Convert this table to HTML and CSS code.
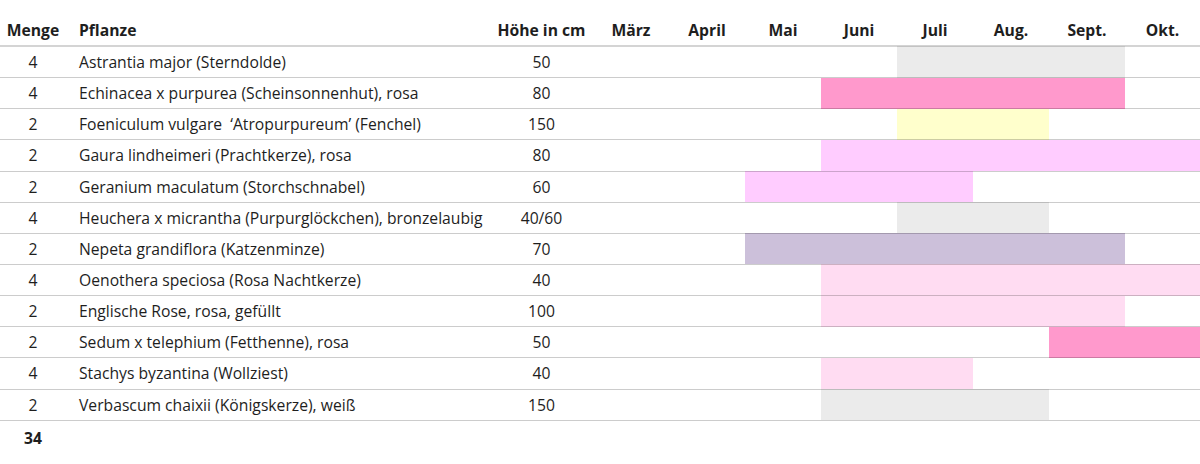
FILE: index.html
```html
<!DOCTYPE html>
<html lang="de">
<head>
<meta charset="utf-8">
<title>Pflanzplan</title>
<link rel="stylesheet" href="styles.css">
</head>
<body>
<table class="plan">
  <colgroup>
    <col class="c-qty"><col class="c-name"><col class="c-h">
    <col class="c-m"><col class="c-m"><col class="c-m"><col class="c-m"><col class="c-m"><col class="c-m"><col class="c-m"><col class="c-m last">
  </colgroup>
  <thead>
    <tr><th>Menge</th><th class="left">Pflanze</th><th>Höhe in cm</th><th>März</th><th>April</th><th>Mai</th><th>Juni</th><th>Juli</th><th>Aug.</th><th>Sept.</th><th>Okt.</th></tr>
  </thead>
  <tbody>
    <tr><td>4</td><td class="left">Astrantia major (Sterndolde)</td><td>50</td><td></td><td></td><td></td><td></td><td class="gray"></td><td class="gray"></td><td class="gray"></td><td></td></tr>
    <tr><td>4</td><td class="left">Echinacea x purpurea (Scheinsonnenhut), rosa</td><td>80</td><td></td><td></td><td></td><td class="pink"></td><td class="pink"></td><td class="pink"></td><td class="pink"></td><td></td></tr>
    <tr><td>2</td><td class="left">Foeniculum vulgare &nbsp;‘Atropurpureum’ (Fenchel)</td><td>150</td><td></td><td></td><td></td><td></td><td class="yellow"></td><td class="yellow"></td><td></td><td></td></tr>
    <tr><td>2</td><td class="left">Gaura lindheimeri (Prachtkerze), rosa</td><td>80</td><td></td><td></td><td></td><td class="lilac"></td><td class="lilac"></td><td class="lilac"></td><td class="lilac"></td><td class="lilac"></td></tr>
    <tr><td>2</td><td class="left">Geranium maculatum (Storchschnabel)</td><td>60</td><td></td><td></td><td class="lilac"></td><td class="lilac"></td><td class="lilac"></td><td></td><td></td><td></td></tr>
    <tr><td>4</td><td class="left">Heuchera x micrantha (Purpurglöckchen), bronzelaubig</td><td>40/60</td><td></td><td></td><td></td><td></td><td class="gray"></td><td class="gray"></td><td></td><td></td></tr>
    <tr><td>2</td><td class="left">Nepeta grandiflora (Katzenminze)</td><td>70</td><td></td><td></td><td class="purple"></td><td class="purple"></td><td class="purple"></td><td class="purple"></td><td class="purple"></td><td></td></tr>
    <tr><td>4</td><td class="left">Oenothera speciosa (Rosa Nachtkerze)</td><td>40</td><td></td><td></td><td></td><td class="rose"></td><td class="rose"></td><td class="rose"></td><td class="rose"></td><td class="rose"></td></tr>
    <tr><td>2</td><td class="left">Englische Rose, rosa, gefüllt</td><td>100</td><td></td><td></td><td></td><td class="rose"></td><td class="rose"></td><td class="rose"></td><td class="rose"></td><td></td></tr>
    <tr><td>2</td><td class="left">Sedum x telephium (Fetthenne), rosa</td><td>50</td><td></td><td></td><td></td><td></td><td></td><td></td><td class="pink"></td><td class="pink"></td></tr>
    <tr><td>4</td><td class="left">Stachys byzantina (Wollziest)</td><td>40</td><td></td><td></td><td></td><td class="rose"></td><td class="rose"></td><td></td><td></td><td></td></tr>
    <tr><td>2</td><td class="left">Verbascum chaixii (Königskerze), weiß</td><td>150</td><td></td><td></td><td></td><td class="gray"></td><td class="gray"></td><td class="gray"></td><td></td><td></td></tr>
  </tbody>
  <tfoot>
    <tr><td class="total">34</td><td colspan="10"></td></tr>
  </tfoot>
</table>
</body>
</html>
```
FILE: styles.css
```css
html, body {
  margin: 0;
  padding: 0;
  background: #ffffff;
}
body {
  font-family: "Open Sans", "Liberation Sans", sans-serif;
  font-size: 15.7px;
  color: #1e1e1e;
}
.plan {
  width: 1200px;
  border-collapse: collapse;
  table-layout: fixed;
}
.c-qty { width: 66px; }
.c-name { width: 424px; }
.c-h { width: 103px; }
.c-m { width: 76px; }
.c-m.last { width: 75px; }

.plan th {
  font-weight: 700;
  text-align: center;
  line-height: 22px;
  padding: 19px 0 4px;
  border-bottom: 2px solid rgba(0, 0, 0, 0.17);
  white-space: nowrap;
}
.plan td {
  text-align: center;
  line-height: 20px;
  height: 30.15px;
  padding: 0;
  border-bottom: 1px solid rgba(0, 0, 0, 0.2);
  white-space: nowrap;
}
.plan .left {
  text-align: left;
  padding-left: 13px;
}
.plan tfoot td {
  border-bottom: none;
  height: 34px;
}
.plan .total {
  font-weight: 700;
}
.gray { background: #ebebeb; }
.pink { background: #ff99cc; }
.yellow { background: #ffffcc; }
.lilac { background: #ffccff; }
.purple { background: #ccc0da; }
.rose { background: #ffdcf2; }
```
